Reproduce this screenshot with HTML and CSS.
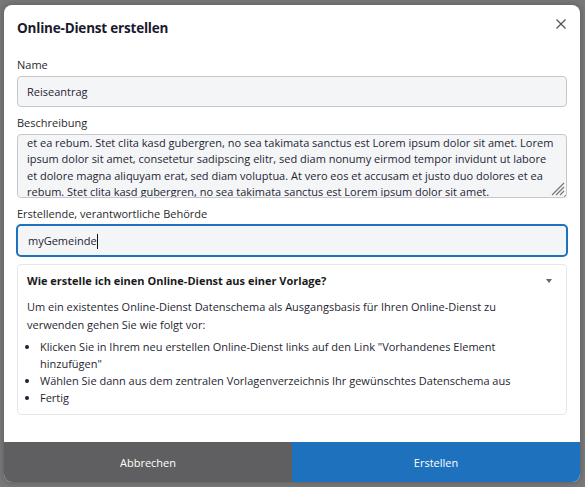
FILE: index.html
```html
<!DOCTYPE html>
<html lang="de">

<head>
    <meta charset="UTF-8">
    <title>Online-Dienst erstellen</title>
    <link rel="stylesheet" href="styles.css">
</head>

<body>

    <div class="modal">
        <div class="modal-header">
            <h2>Online-Dienst erstellen</h2>
            <button class="close" aria-label="Schließen">
                <svg width="10" height="10" viewBox="0 0 10 10">
                    <path d="M0.5 0.5 L9.5 9.5 M9.5 0.5 L0.5 9.5" stroke="#555" stroke-width="1.3" fill="none" />
                </svg>
            </button>
        </div>

        <div class="modal-body">
            <label>Name</label>
            <div class="field">Reiseantrag</div>

            <label class="gap">Beschreibung</label>
            <div class="field textarea">
                et ea rebum. Stet clita kasd gubergren, no sea takimata sanctus est Lorem ipsum dolor sit amet. Lorem<br>
                ipsum dolor sit amet, consetetur sadipscing elitr, sed diam nonumy eirmod tempor invidunt ut labore<br>
                et dolore magna aliquyam erat, sed diam voluptua. At vero eos et accusam et justo duo dolores et ea<br>
                rebum. Stet clita kasd gubergren, no sea takimata sanctus est Lorem ipsum dolor sit amet.
                <svg class="grip" width="14" height="14" viewBox="0 0 14 14">
                    <path d="M13 1 L1 13 M13 5 L5 13 M13 9 L9 13" stroke="#777" stroke-width="1.2" fill="none" />
                </svg>
                <span class="dot"></span>
            </div>

            <label class="gap">Erstellende, verantwortliche Behörde</label>
            <div class="field focus">myGemeinde<span class="caret"></span></div>

            <div class="hint">
                <div class="hint-title">Wie erstelle ich einen Online-Dienst aus einer Vorlage?<span class="arrow"></span></div>
                <p>Um ein existentes Online-Dienst Datenschema als Ausgangsbasis für Ihren Online-Dienst zu<br>
                    verwenden gehen Sie wie folgt vor:</p>
                <ul>
                    <li>Klicken Sie in Ihrem neu erstellen Online-Dienst links auf den Link "Vorhandenes Element<br>
                        hinzufügen"</li>
                    <li>Wählen Sie dann aus dem zentralen Vorlagenverzeichnis Ihr gewünschtes Datenschema aus</li>
                    <li>Fertig</li>
                </ul>
            </div>
        </div>

        <div class="modal-footer">
            <button class="btn cancel">Abbrechen</button>
            <button class="btn primary">Erstellen</button>
        </div>
    </div>

</body>

</html>
```

FILE: styles.css
```css
body {
    margin: 0;
    padding: 5px 5px 5px 4px;
    background-color: #787878;
    font-family: "Open Sans", sans-serif;
    font-size: 11px;
    color: #1f1f33;
}

.modal {
    width: 576px;
    height: 477px;
    background: #fff;
    border-radius: 8px;
    overflow: hidden;
    display: flex;
    flex-direction: column;
    box-shadow: 0 0 6px rgba(0, 0, 0, 0.25);
}

.modal-header {
    display: flex;
    justify-content: space-between;
    align-items: flex-start;
    padding: 13px 14px 0 13px;
}

.modal-header h2 {
    margin: 0;
    font-size: 13.5px;
    letter-spacing: -0.2px;
    line-height: 20px;
    font-weight: bold;
    color: #1a1a2e;
}

.close {
    margin-top: 1px;
    padding: 0;
    border: none;
    background: none;
    line-height: 0;
    cursor: pointer;
}

.modal-body {
    flex: 1;
    padding: 19px 13px 0;
}

label {
    display: block;
    line-height: 16px;
    color: #2a2a2a;
}

label.gap {
    margin-top: 8px;
}

.field {
    position: relative;
    box-sizing: border-box;
    margin-top: 3px;
    height: 31px;
    padding: 0 9px;
    line-height: 29px;
    background: #f4f5f7;
    border: 1px solid #c6c7ca;
    border-radius: 4px;
}

.textarea {
    height: 64px;
    line-height: 16.3px;
    white-space: nowrap;
    overflow: hidden;
    padding-top: 0;
}

.grip {
    position: absolute;
    right: 1px;
    bottom: 1px;
}

.dot {
    position: absolute;
    right: -3px;
    bottom: -3px;
    width: 5px;
    height: 5px;
    border-radius: 50%;
    background: #e8204e;
}

.focus {
    margin: 2px -1px 0;
    height: 33px;
    padding: 0 10px;
    border: 2px solid #1e72bd;
    border-radius: 5px;
}

.caret {
    display: inline-block;
    width: 1px;
    height: 15px;
    background: #111;
    vertical-align: middle;
    margin-top: -2px;
}

.hint {
    margin-top: 7px;
    height: 151px;
    box-sizing: border-box;
    padding: 7px 9px 8px;
    border: 1px solid #e6e7ea;
    border-radius: 4px;
}

.hint-title {
    display: flex;
    justify-content: space-between;
    align-items: center;
    font-weight: bold;
    line-height: 18px;
    color: #1a1a1a;
}

.arrow {
    margin-right: 5px;
    border-left: 3.5px solid transparent;
    border-right: 3.5px solid transparent;
    border-top: 4px solid #666;
}

.hint p {
    margin: 8px 0 4px;
    line-height: 18px;
}

.hint ul {
    margin: 0;
    padding-left: 13px;
    line-height: 17px;
}

.modal-footer {
    display: flex;
    height: 40px;
}

.btn {
    flex: 1;
    border: none;
    color: #fff;
    font-family: "Open Sans", sans-serif;
    font-size: 11px;
    cursor: pointer;
}

.cancel {
    background-color: #5f5f61;
}

.primary {
    background-color: #1e72bd;
}
```
